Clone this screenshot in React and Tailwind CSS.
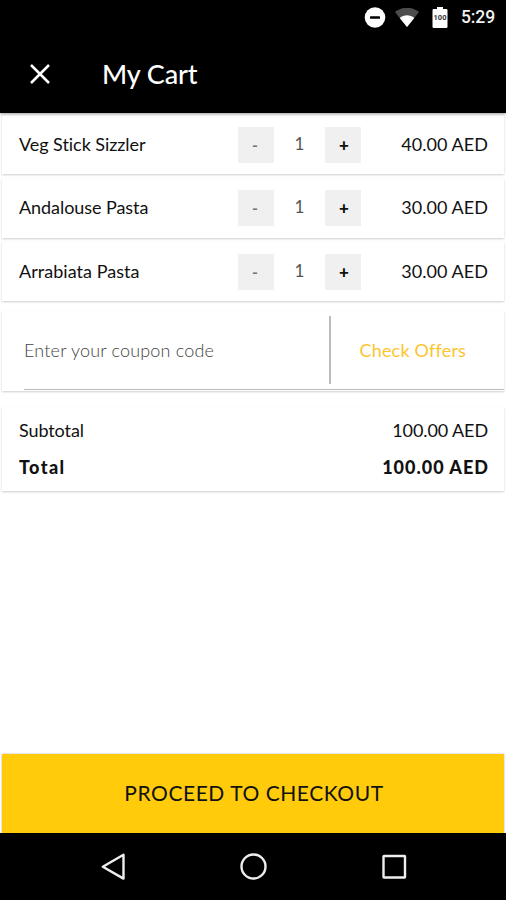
import React from "react";

const items = [
  { name: "Veg Stick Sizzler", price: "40.00 AED", nameClass: "tracking-[-0.05px]" },
  { name: "Andalouse Pasta", price: "30.00 AED", nameClass: "tracking-[-0.06px]" },
  { name: "Arrabiata Pasta", price: "30.00 AED", nameClass: "tracking-[0.04px]" },
];

const card = "mx-[2px] bg-white shadow-[0_1px_2px_rgba(0,0,0,0.2)]";

function StatusBar() {
  return (
    <div className="flex h-[36px] items-center justify-end pr-[11px]">
      <svg width="22" height="22" viewBox="0 0 22 22" className="mr-[9px]">
        <circle cx="11" cy="10.5" r="10.3" fill="#fff" />
        <rect x="6" y="9.2" width="10" height="2.6" rx=".6" fill="#000" />
      </svg>
      <svg width="24" height="20" viewBox="0 0 24 20" className="mr-[13px]">
        <path d="M0 4.1C7-1.7 17-1.7 24 4.1L12 19.1Z" fill="#4c4c4c" />
        <path d="M4.7 10C9 6.2 15 6.2 19.3 10L12 19.1Z" fill="#fff" />
      </svg>
      <svg width="16" height="22" viewBox="0 0 16 22" className="mr-[13px]">
        <path d="M5 0h6v2h3.4Q15.500 2 15.500 3.200V19.800Q15.500 21 14.300 21H1.700Q.5 21 .5 19.800V3.200Q.5 2 1.700 2H5Z" fill="#fff" />
        <text x="8" y="13.4" textAnchor="middle" fontSize="7.5" fontWeight="700" fontFamily="Roboto, sans-serif" fill="#333">100</text>
      </svg>
      <span className="font-['Roboto',sans-serif] text-[17.5px] font-medium leading-none tracking-[-0.1px] text-[#f2f2f2]">5:29</span>
    </div>
  );
}

function CartRow({ item }) {
  return (
    <div className={`${card} flex h-[59px] items-center pl-[17px] pr-[16px] text-[18px]`}>
      <span className={`w-[219px] whitespace-nowrap pb-[2px] ${item.nameClass}`}>{item.name}</span>
      <button className="flex h-[36px] w-[36px] items-center justify-center bg-[#f0f0f0] pr-[2px] text-[16px] font-bold text-[#777]">-</button>
      <span className="w-[51px] pb-[3px] text-center text-[17px] text-[#555]">1</span>
      <button className="flex h-[36px] w-[36px] items-center justify-center bg-[#f0f0f0] pb-[1px] pl-[2px] text-[17px] font-black">+</button>
      <span className="ml-auto whitespace-nowrap pb-[2px] tracking-[0.05px]">{item.price}</span>
    </div>
  );
}

export default function App() {
  return (
    <div className="flex h-[900px] w-[506px] flex-col overflow-hidden bg-white font-['Lato','Liberation_Sans',sans-serif] leading-none text-[#111] [font-variant-ligatures:none]">
      <header className="relative h-[113px] shrink-0 bg-black text-white shadow-[0_1px_3px_rgba(0,0,0,0.4)]">
        <StatusBar />
        <div className="flex h-[75px] items-center pl-[30px]">
          <svg width="20" height="20" viewBox="0 0 20 20" className="mr-[52px]">
            <path d="M1 1l18 18M19 1L1 19" stroke="#fff" strokeWidth="2.5" fill="none" />
          </svg>
          <h1 className="text-[27px] font-medium tracking-[-0.1px]">My Cart</h1>
        </div>
      </header>
      <main className="flex flex-1 flex-col">
        <section className="mt-[2px] flex flex-col gap-[4.5px]">
          {items.map((item) => <CartRow key={item.name} item={item} />)}
        </section>
        <section className={`${card} mt-[10px] flex h-[80px] items-start`}>
          <div className="ml-[22px] flex h-[79px] w-[305px] items-center border-b border-[#bbb] pb-[1px] text-[18px] font-light text-[#444]">
            <span className="whitespace-nowrap tracking-[0.18px]">Enter your coupon code</span>
          </div>
          <div className="flex h-[79px] items-start border-b border-[#bbb] pt-[5px]">
            <div className="h-[68px] w-[1.5px] bg-[#bbb]" />
          </div>
          <div className="flex h-[79px] flex-1 items-center border-b border-[#bbb] pb-[1px] pl-[29px] text-[18px] text-[#fcc52e]">
            <span className="whitespace-nowrap tracking-[0.18px]">Check Offers</span>
          </div>
        </section>
        <section className={`${card} mt-[16px] flex h-[84px] flex-col gap-[19px] pl-[17px] pr-[16px] pt-[14px] text-[18px]`}>
          <div className="flex justify-between"><span className="tracking-[-0.1px]">Subtotal</span><span className="tracking-[-0.1px]">100.00 AED</span></div>
          <div className="flex justify-between font-black"><span className="tracking-[1.4px]">Total</span><span className="-mr-[1px] tracking-[1px]">100.00 AED</span></div>
        </section>
        <button className="mx-[2px] mt-auto flex h-[79px] items-center justify-center bg-[#ffcb0b] pb-[2px] pl-[2px] text-[21px] tracking-[0.55px] shadow-[0_0_2px_rgba(0,0,0,0.3)]">PROCEED TO CHECKOUT</button>
      </main>
      <nav className="relative h-[67px] shrink-0 bg-black">
        <svg width="506" height="67" viewBox="0 0 506 67" fill="none" stroke="#eee" strokeWidth="2.4" strokeLinejoin="round">
          <path d="M123.5 21.800v23.800L102.800 33.700Z" />
          <circle cx="253.500" cy="33.500" r="12" />
          <rect x="383.500" y="23" width="21.500" height="21.500" rx="0.500" />
        </svg>
      </nav>
    </div>
  );
}
